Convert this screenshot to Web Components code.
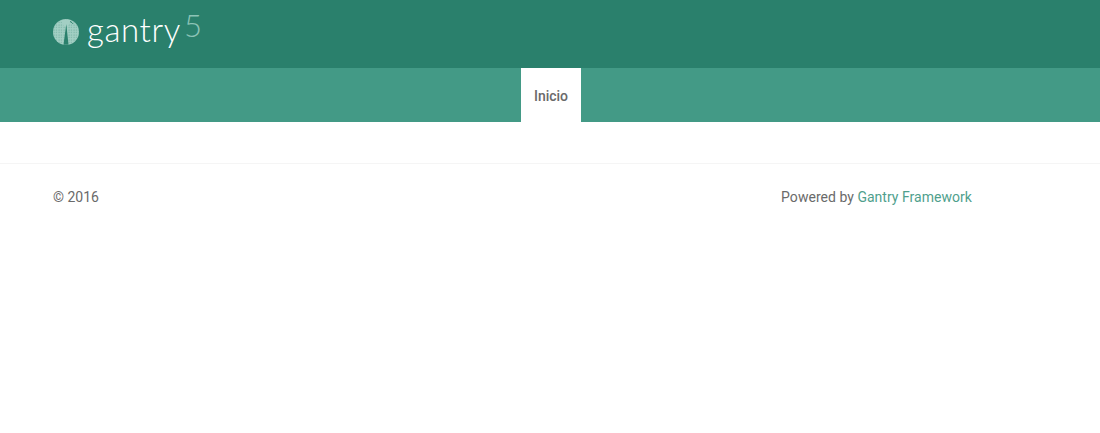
<!DOCTYPE html>
<html lang="es">
<head>
<meta charset="utf-8">
<title>Inicio</title>
<style>
  html, body { margin: 0; background: #fff; }
  body { font-family: Roboto, "Liberation Sans", sans-serif; }
  site-footer a { color: #4f9f8d; text-decoration: none; }
</style>
</head>
<body>
<site-header></site-header>
<site-nav><nav-item active>Inicio</nav-item></site-nav>
<site-footer>
  <span slot="left">© 2016</span>
  <span slot="right">Powered by <a href="#">Gantry Framework</a></span>
</site-footer>

<script>
/*
 * Top bar with the logo.
 */
customElements.define('site-header',
  class extends HTMLElement {
    constructor () {
      super()
      this.attachShadow({ mode: 'open' }).innerHTML = `
        <style>
          :host {
            display: flex;
            align-items: center;
            height: 68px;
            padding: 0 0 4px 53px;
            box-sizing: border-box;
            background: #2a806c;
          }
          .logo { display: flex; align-items: center; gap: 8px; color: #fff; }
          svg { display: block; flex: none; }
          .text { display: flex; align-items: flex-start; gap: 3px; height: 34px; }
          .name {
            font: 300 33px/34px Lato, sans-serif;
            letter-spacing: 0.6px;
            margin-top: -3px;
          }
          .five {
            font: 300 31px/34px Lato, sans-serif;
            color: #8cc3b6;
            margin-top: -7px;
          }
        </style>
        <div class="logo">
          <svg width="26" height="26" viewBox="0 0 26 26">
            <defs>
              <pattern id="leaf" width="2.500" height="2.500" patternUnits="userSpaceOnUse">
                <circle cx="1" cy="1" r=".55" fill="#2a806c" opacity=".55"/>
              </pattern>
            </defs>
            <circle cx="13" cy="13" r="13" fill="#a3cfc4"/>
            <circle cx="13" cy="13" r="13" fill="url(#leaf)"/>
            <path d="M8 1.400C10 .6 16 .6 18 1.400L15 7H11z" fill="#a3cfc4"/>
            <path d="M17 2.500c1.500.6 2.500 1.500 3 2.500" stroke="#2a806c" stroke-width="1" fill="none"/>
            <path d="M13.300 5 15.500 25.800H10.500z" fill="#2a806c"/>
          </svg>
          <div class="text"><span class="name">gantry</span><span class="five">5</span></div>
        </div>
      `
    }
  }
)

/*
 * Menu bar, items are slotted and centered.
 */
customElements.define('site-nav',
  class extends HTMLElement {
    constructor () {
      super()
      this.attachShadow({ mode: 'open' }).innerHTML = `
        <style>
          :host {
            display: flex;
            justify-content: center;
            height: 54px;
            padding-left: 2px;
            background: #439a86;
          }
        </style>
        <slot></slot>
      `
    }
  }
)

customElements.define('nav-item',
  class extends HTMLElement {
    constructor () {
      super()
      this.attachShadow({ mode: 'open' }).innerHTML = `
        <style>
          :host {
            display: flex;
            align-items: center;
            padding: 2px 13px 0;
            font: 500 14px Roboto, sans-serif;
            color: #6a6a6a;
          }
          :host([active]) { background: #fff; }
        </style>
        <slot></slot>
      `
    }
  }
)

/*
 * Footer, one line with copyright and the powered by text.
 */
customElements.define('site-footer',
  class extends HTMLElement {
    constructor () {
      super()
      this.attachShadow({ mode: 'open' }).innerHTML = `
        <style>
          :host {
            display: flex;
            justify-content: space-between;
            margin-top: 41px;
            padding: 25px 128px 0 53px;
            border-top: 1px solid #f5f5f5;
            font: 400 14px/16px Roboto, sans-serif;
            color: #6a6a6a;
          }
          ::slotted(span) { display: block; }
          ::slotted([slot="right"]) { letter-spacing: 0.03px; }
        </style>
        <slot name="left"></slot>
        <slot name="right"></slot>
      `
    }
  }
)
</script>
</body>
</html>
